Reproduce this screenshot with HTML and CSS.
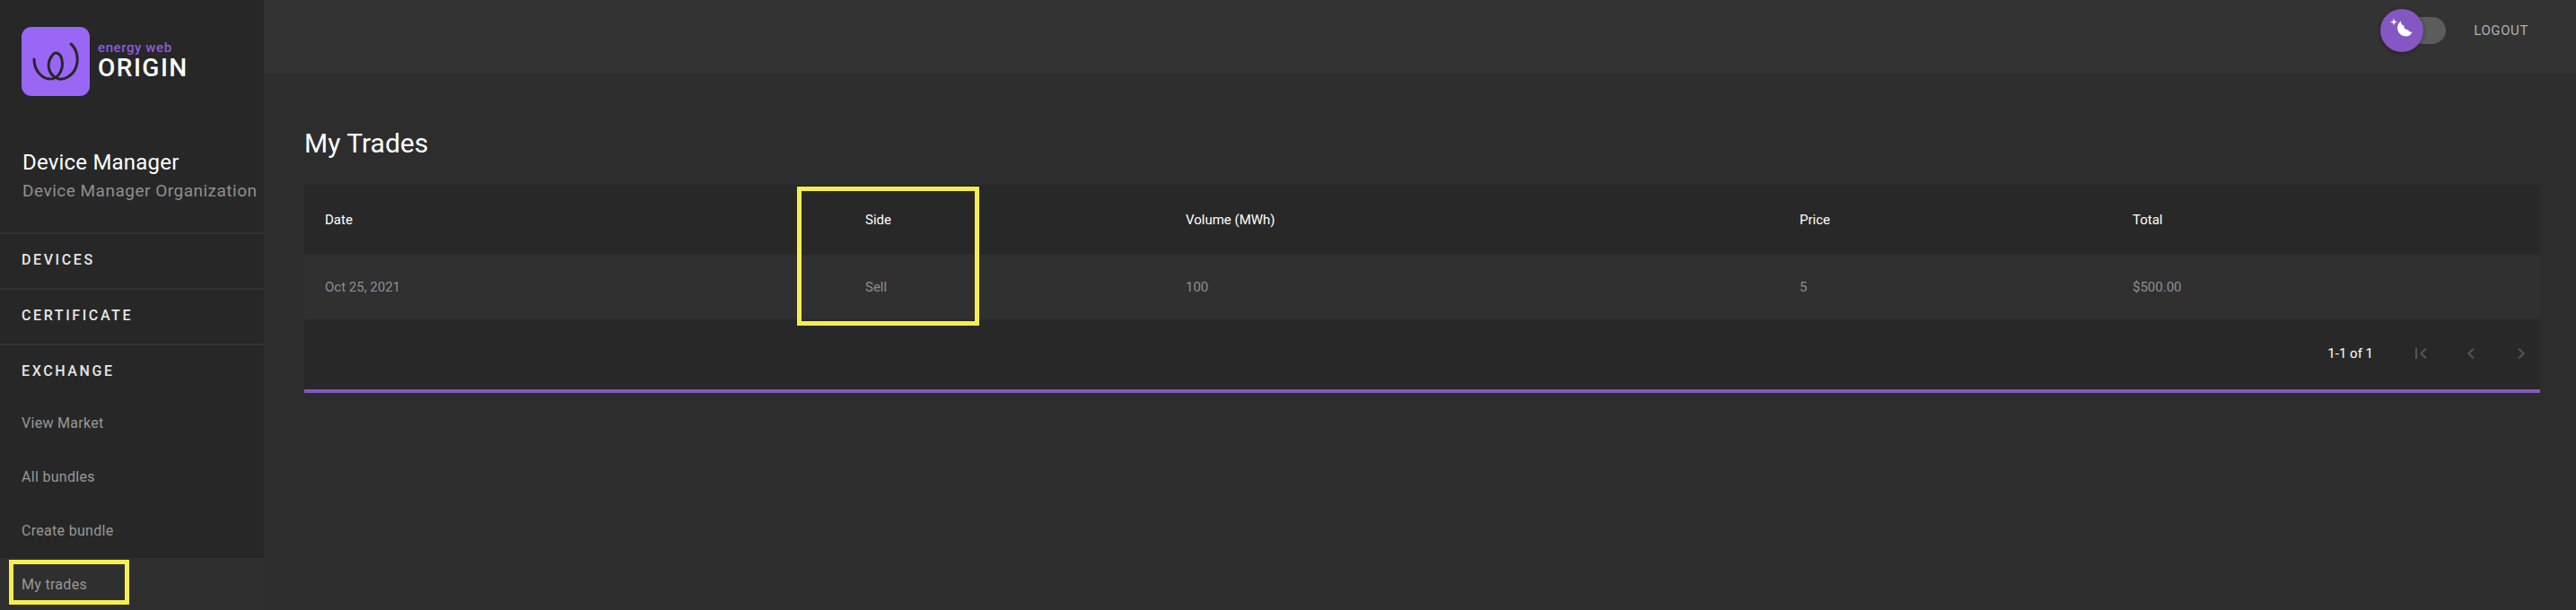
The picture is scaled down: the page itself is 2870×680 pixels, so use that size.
FILE: index.html
```html
<!DOCTYPE html>
<html lang="en">
<head>
    <meta charset="UTF-8">
    <meta name="viewport" content="width=device-width, initial-scale=1.0">
    <title>My Trades</title>
    <link rel="stylesheet" href="styles.css">
</head>
<body>
    <div class="app">
        <aside class="sidebar">
            <div class="logo">
                <div class="logo-mark">
                    <svg width="76" height="77" viewBox="0 0 76 77">
                        <path d="M14 36C14 50 24 58 32 58C42 58 47 46 45 37C44 30 38 26 34 32C28 40 29 50 37 56C46 62 58 54 61 44C64 34 61 24 55 19" fill="none" stroke="#272727" stroke-width="3" stroke-linecap="round"/>
                    </svg>
                </div>
                <div class="logo-text">
                    <span class="logo-small">energy web</span>
                    <span class="logo-big">ORIGIN</span>
                </div>
            </div>
            <div class="user">
                <div class="user-name">Device Manager</div>
                <div class="user-org">Device Manager Organization</div>
            </div>
            <nav class="nav">
                <a class="nav-head">DEVICES</a>
                <a class="nav-head">CERTIFICATE</a>
                <a class="nav-head nav-open">EXCHANGE</a>
                <a class="nav-item">View Market</a>
                <a class="nav-item">All bundles</a>
                <a class="nav-item">Create bundle</a>
                <a class="nav-item active">My trades<span class="mark mark-nav"></span></a>
            </nav>
        </aside>
        <div class="main">
            <header class="topbar">
                <div class="switch">
                    <div class="switch-track"></div>
                    <div class="switch-thumb">
                        <svg width="32" height="32" viewBox="0 0 32 32">
                            <path d="M7 2.5L8 5.5L11 6.5L8 7.5L7 10.500L6 7.500L3 6.500L6 5.500Z" fill="#fff"/>
                            <path d="M15 5.500C12.500 7 11 10 11 13C11 18.500 15.500 22.500 20.500 22.500C24 22.500 26.500 20.500 27.500 17.500C25 18 23.500 17 23 15C20 15.500 18 13.500 18.500 10.500C16 10.500 15 8 15 5.500Z" fill="#fff"/>
                        </svg>
                    </div>
                </div>
                <a class="logout">LOGOUT</a>
            </header>
            <section class="content">
                <h1 class="title">My Trades</h1>
                <div class="table-wrap">
                    <table class="trades">
                        <colgroup>
                            <col class="col-date">
                            <col class="col-side">
                            <col class="col-volume">
                            <col class="col-price">
                            <col class="col-total">
                        </colgroup>
                        <thead>
                            <tr>
                                <th>Date</th>
                                <th>Side</th>
                                <th>Volume (MWh)</th>
                                <th>Price</th>
                                <th>Total</th>
                            </tr>
                        </thead>
                        <tbody>
                            <tr>
                                <td>Oct 25, 2021</td>
                                <td>Sell</td>
                                <td>100</td>
                                <td>5</td>
                                <td>$500.00</td>
                            </tr>
                        </tbody>
                    </table>
                    <div class="pager">
                        <span class="pager-count">1-1 of 1</span>
                        <svg class="pager-icon" width="24" height="24" viewBox="0 0 24 24"><path d="M18.410 16.590L13.820 12l4.590-4.590L17 6l-6 6 6 6zM6 6h2v12H6z"/></svg>
                        <svg class="pager-icon" width="24" height="24" viewBox="0 0 24 24"><path d="M15.410 7.410L14 6l-6 6 6 6 1.410-1.410L10.830 12z"/></svg>
                        <svg class="pager-icon" width="24" height="24" viewBox="0 0 24 24"><path d="M10 6L8.590 7.410 13.170 12l-4.580 4.590L10 18l6-6z"/></svg>
                    </div>
                    <span class="mark mark-side"></span>
                </div>
            </section>
        </div>
    </div>
</body>
</html>
```

FILE: styles.css
```css
* {
    box-sizing: border-box;
}
html, body {
    margin: 0;
    height: 100%;
    overflow: hidden;
}
body {
    font-family: Roboto, sans-serif;
    background-color: #2d2d2d;
    color: #fff;
}
.app {
    display: flex;
    height: 680px;
}
.sidebar {
    width: 294px;
    flex-shrink: 0;
    background-color: #272727;
}
.logo {
    display: flex;
    padding: 30px 0 0 24px;
}
.logo-mark {
    width: 76px;
    height: 77px;
    border-radius: 11px;
    background-color: #9a66f5;
}
.logo-text {
    display: flex;
    flex-direction: column;
    margin-left: 9px;
    padding-top: 14px;
}
.logo-small {
    font-size: 15px;
    line-height: 19px;
    font-weight: 500;
    letter-spacing: 0.6px;
    color: #8d5cdb;
}
.logo-big {
    font-size: 28px;
    line-height: 26px;
    font-weight: 500;
    letter-spacing: 1.5px;
}
.user {
    padding: 60px 0 0 25px;
}
.user-name {
    font-size: 24px;
    line-height: 28px;
    letter-spacing: 0.2px;
}
.user-org {
    margin-top: 6px;
    font-size: 19px;
    line-height: 24px;
    letter-spacing: 0.5px;
    color: #8f8f8f;
}
.nav {
    margin-top: 34px;
}
.nav a {
    display: block;
    padding-left: 24px;
}
.nav-head {
    height: 62px;
    line-height: 58px;
    border-top: 2px solid #333;
    font-size: 16px;
    font-weight: 500;
    letter-spacing: 2.6px;
    color: #e6e6e6;
}
.nav-item {
    position: relative;
    height: 60px;
    line-height: 60px;
    font-size: 16px;
    letter-spacing: 0.3px;
    color: #989898;
}
.nav-open {
    height: 59px;
}
.active {
    background-color: #2f2f2f;
}
.mark {
    position: absolute;
    border: 5px solid #f5ee4e;
}
.mark-nav {
    left: 10px;
    top: 2px;
    width: 134px;
    height: 50px;
}
.main {
    flex: 1;
    min-width: 0;
}
.topbar {
    display: flex;
    align-items: center;
    justify-content: flex-end;
    height: 82px;
    padding: 0 53px 14px 0;
    background-color: #333;
}
.switch {
    position: relative;
    width: 73px;
    height: 48px;
    margin-right: 31px;
}
.switch-track {
    position: absolute;
    left: 24px;
    top: 9px;
    width: 49px;
    height: 30px;
    border-radius: 15px;
    background-color: #5c5c5c;
}
.switch-thumb {
    position: absolute;
    left: 0;
    top: 0;
    width: 48px;
    height: 48px;
    padding: 8px;
    border-radius: 50%;
    background-color: #8557c2;
    box-shadow: 0 1px 4px rgba(0, 0, 0, 0.4);
}
.switch-thumb svg {
    display: block;
}
.logout {
    font-size: 15px;
    letter-spacing: 0.6px;
    color: #b0b0b0;
}
.content {
    padding: 0 40px 0 45px;
}
.title {
    margin: 0;
    height: 124px;
    padding-top: 59px;
    font-size: 30px;
    line-height: 38px;
    font-weight: 400;
}
.table-wrap {
    position: relative;
    background-color: #282828;
    border-bottom: 4px solid #8557c2;
}
.trades {
    width: 100%;
    table-layout: fixed;
    border-collapse: collapse;
}
.col-date { width: 602px; }
.col-side { width: 357px; }
.col-volume { width: 684px; }
.col-price { width: 371px; }
.trades th, .trades td {
    padding: 0 0 0 23px;
    text-align: left;
    font-size: 15px;
}
.trades th {
    height: 78px;
    font-weight: 400;
    color: #fff;
}
.trades td {
    height: 72px;
    color: #8f8f8f;
    background-color: #303030;
}
.pager {
    display: flex;
    align-items: center;
    justify-content: flex-end;
    height: 78px;
    padding: 0 9px 2px 0;
    color: #fff;
}
.pager-count {
    margin-right: 41px;
    font-size: 15px;
}
.pager-icon {
    fill: #555;
    margin-left: 32px;
}
.pager-count + .pager-icon {
    margin-left: 0;
}
.mark-side {
    left: 549px;
    top: 2px;
    width: 203px;
    height: 155px;
}
```
